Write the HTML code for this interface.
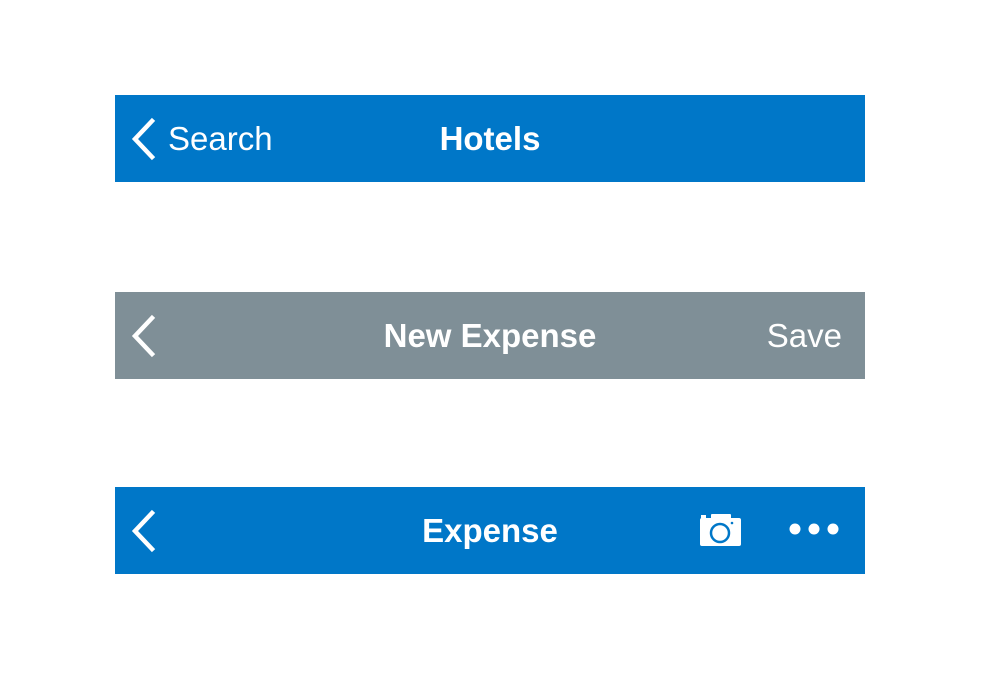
<!DOCTYPE html>
<html><head><style>
html,body{margin:0;padding:0;background:#fff;width:982px;height:675px;overflow:hidden;font-family:"Liberation Sans",Arial,sans-serif;}
.bar{position:absolute;left:115px;width:750px;height:87px;color:#fff;}
.blue{background:#0077c8;}
.gray{background:#7f8f97;}
.t{position:absolute;top:0;line-height:87px;font-size:33px;white-space:nowrap;}
.title{left:0;width:750px;text-align:center;font-weight:bold;}
svg{position:absolute;}
</style></head><body>
<div class="bar blue" style="top:95px">
 <svg style="left:0;top:0" width="60" height="87"><polyline points="37,26 20,44 37,62" fill="none" stroke="#fff" stroke-width="4.5" stroke-linecap="square"/></svg>
 <div class="t" style="left:53px">Search</div>
 <div class="t title" style="left:0">Hotels</div>
</div>
<div class="bar gray" style="top:292px">
 <svg style="left:0;top:0" width="60" height="87"><polyline points="37,26 20,44 37,62" fill="none" stroke="#fff" stroke-width="4.5" stroke-linecap="square"/></svg>
 <div class="t title">New Expense</div>
 <div class="t" style="right:23px">Save</div>
</div>
<div class="bar blue" style="top:487px">
 <svg style="left:0;top:0" width="60" height="87"><polyline points="37,26 20,44 37,62" fill="none" stroke="#fff" stroke-width="4.5" stroke-linecap="square"/></svg>
 <div class="t title">Expense</div>
 <svg style="left:585px;top:26px" width="42" height="34">
  <rect x="0" y="5" width="41" height="28" rx="2" fill="#fff"/>
  <rect x="11" y="1" width="20" height="6" rx="1" fill="#fff"/>
  <rect x="1" y="2" width="5" height="4" fill="#fff"/>
  <circle cx="20" cy="20" r="9" fill="none" stroke="#0077c8" stroke-width="2.5"/>
  <circle cx="32" cy="10" r="1.3" fill="#0077c8"/>
 </svg>
 <svg style="left:670px;top:30px" width="60" height="24">
  <circle cx="10" cy="12" r="5.5" fill="#fff"/><circle cx="29" cy="12" r="5.5" fill="#fff"/><circle cx="48" cy="12" r="5.5" fill="#fff"/>
 </svg>
</div>
</body></html>
